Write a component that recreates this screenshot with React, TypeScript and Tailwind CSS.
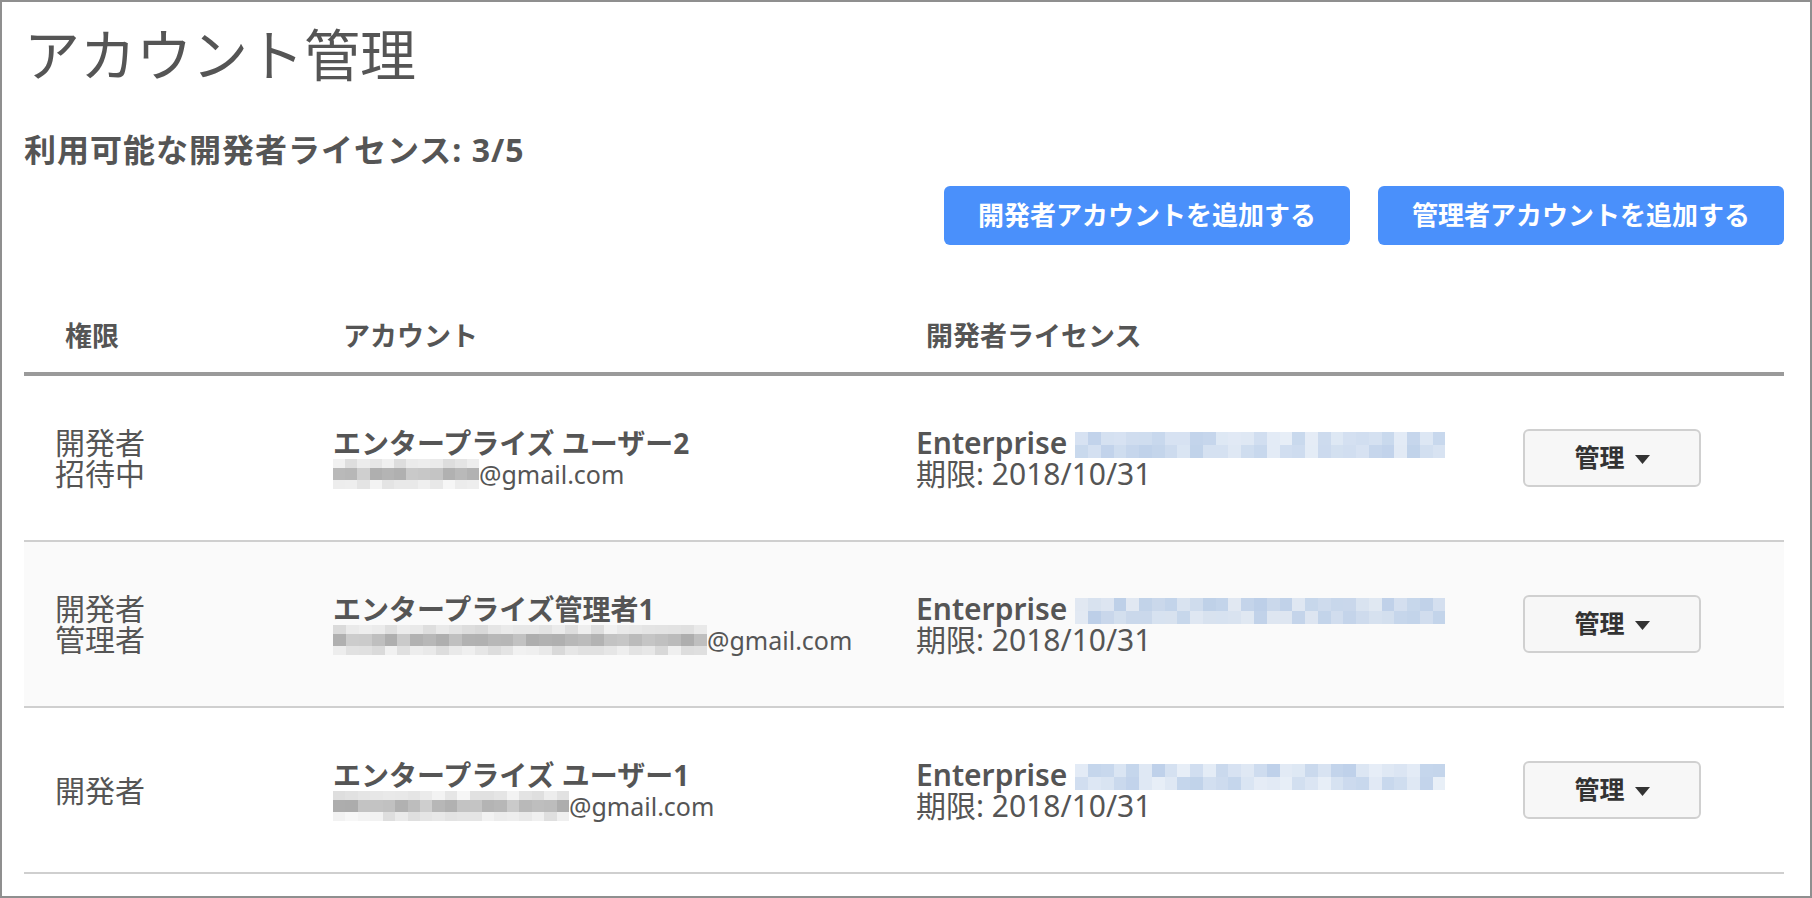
type Account = {
  roles: string[];
  name: string;
  mailBlur: number;
  seed: number;
  shaded?: boolean;
};

const accounts: Account[] = [
  { roles: ["開発者", "招待中"], name: "エンタープライズ ユーザー2", mailBlur: 146, seed: 3 },
  { roles: ["開発者", "管理者"], name: "エンタープライズ管理者1", mailBlur: 374, seed: 11, shaded: true },
  { roles: ["開発者"], name: "エンタープライズ ユーザー1", mailBlur: 236, seed: 23 },
];

// small seeded generator so the mosaic looks the same every time
function rand(seed: number) {
  let s = seed * 9301 + 49297;
  return () => {
    s = (s * 9301 + 49297) % 233280;
    return s / 233280;
  };
}

function Mosaic({ width, seed, tone }: { width: number; seed: number; tone: "gray" | "blue" }) {
  const r = rand(seed);
  const cols = Math.ceil(width / 13);
  const rows = tone === "gray" ? [9, 12, 9] : [13, 13];
  return (
    <span className="inline-flex flex-col align-middle" style={{ width }}>
      {rows.map((h, y) => (
        <span key={y} className="flex" style={{ height: h }}>
          {Array.from({ length: cols }).map((_, x) => {
            const v = r();
            let bg: string;
            if (tone === "gray") {
              const a = y === 1 ? 0.45 + v * 0.35 : 0.08 + v * 0.25;
              bg = `rgba(150,150,150,${a.toFixed(2)})`;
            } else {
              const a = 0.22 + v * 0.4;
              bg = `rgba(150,180,220,${a.toFixed(2)})`;
            }
            return <span key={x} className="h-full flex-1" style={{ background: bg }} />;
          })}
        </span>
      ))}
    </span>
  );
}

function App() {
  return (
    <div
      className="w-[1812px] h-[898px] overflow-hidden border-2 border-[#8f8f8f] bg-white pl-[22px] pr-[26px] text-[#555]"
      style={{ fontFamily: '"Noto Sans", "Noto Sans CJK JP", sans-serif' }}
    >
      <h1 className="mt-[24px] text-[56px] leading-[56px] font-normal">アカウント管理</h1>
      <p className="mt-[50px] text-[32px] leading-[36px] font-bold tracking-[1px]">
        利用可能な開発者ライセンス: 3/5
      </p>

      <div className="mt-[18px] flex justify-end gap-[28px]">
        <button className="h-[59px] w-[406px] rounded-[6px] bg-[#4a90fb] text-[26px] font-bold text-white">
          開発者アカウントを追加する
        </button>
        <button className="h-[59px] w-[406px] rounded-[6px] bg-[#4a90fb] text-[26px] font-bold text-white">
          管理者アカウントを追加する
        </button>
      </div>

      <div className="mt-[76px] grid grid-cols-[278px_583px_1fr] border-b-4 border-[#9a9a9a] pl-[41px] pb-[21px] text-[27px] leading-[30px] font-bold">
        <div>権限</div>
        <div>アカウント</div>
        <div>開発者ライセンス</div>
      </div>

      {accounts.map((a) => (
        <div
          key={a.name}
          className={
            "grid h-[166px] grid-cols-[278px_583px_1fr_178px] items-center border-b-2 border-[#cfcfcf] pl-[31px] pr-[83px] " +
            (a.shaded ? "bg-[#fafafa]" : "bg-white")
          }
        >
          <div className="text-[30px] leading-[31px]">
            {a.roles.map((r) => (
              <div key={r}>{r}</div>
            ))}
          </div>
          <div className="flex flex-col items-start">
            <span className="text-[28px] leading-[32px] font-bold">{a.name}</span>
            <span className="flex items-center text-[25px] leading-[30px]">
              <Mosaic width={a.mailBlur} seed={a.seed} tone="gray" />
              <span>@gmail.com</span>
            </span>
          </div>
          <div className="flex flex-col items-start text-[30px] leading-[31px]">
            <span className="flex items-center">
              <span className="font-semibold">Enterprise</span>
              <span className="ml-[8px]">
                <Mosaic width={370} seed={a.seed + 5} tone="blue" />
              </span>
            </span>
            <span>期限: 2018/10/31</span>
          </div>
          <button className="flex h-[58px] w-[178px] items-center justify-center gap-[10px] rounded-[6px] border-2 border-[#d0d0d0] bg-[#f7f7f7] text-[25px] font-bold text-[#333]">
            管理
            <svg width="15" height="9" viewBox="0 0 15 9" className="mt-[2px]">
              <path d="M0 0h15L7.5 9z" fill="#333" />
            </svg>
          </button>
        </div>
      ))}
    </div>
  );
}

export default App;
